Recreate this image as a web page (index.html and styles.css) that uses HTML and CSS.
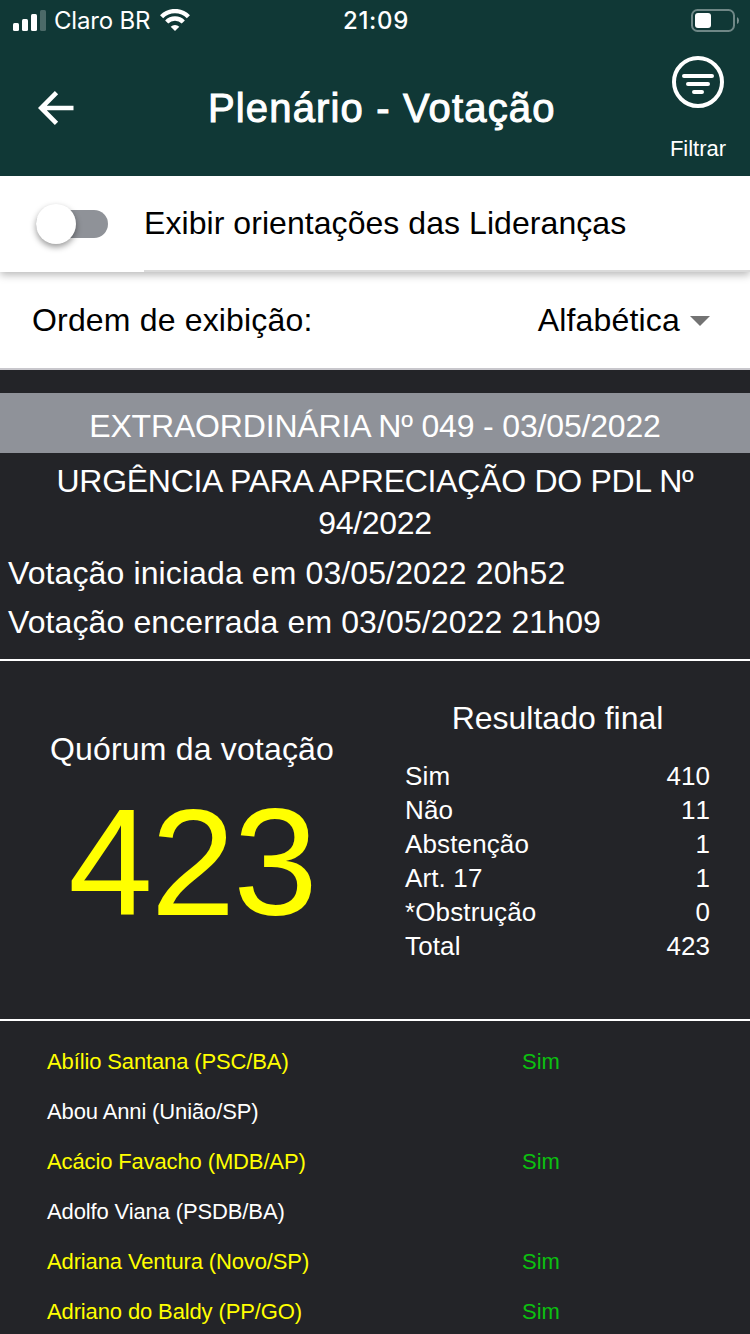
FILE: index.html
```html
<!DOCTYPE html>
<html lang="pt-BR">
<head>
  <meta charset="UTF-8" />
  <meta name="viewport" content="width=device-width, initial-scale=1" />
  <title>Plenário - Votação</title>
  <link rel="stylesheet" href="styles.css">
</head>
<body>
  <header class="header">
    <!-- Status bar -->
    <div class="status">
      <div class="carrier">
        <svg class="signal" width="33" height="21" viewBox="0 0 33 21" fill="#fff">
          <rect x="0" y="13" width="6" height="8" rx="1.5" />
          <rect x="9" y="9" width="6" height="12" rx="1.5" />
          <rect x="18" y="4" width="6" height="17" rx="1.5" />
          <rect x="27" y="0" width="6" height="21" rx="1.5" opacity="0.25" />
        </svg>
        <span class="carrier-name">Claro BR</span>
        <svg class="wifi" width="30" height="22" viewBox="0 0 30 22">
          <g fill="none" stroke="#fff" stroke-width="4.4">
            <path d="M1.6 7.7a18.8 18.8 0 0 1 26.8 0" />
            <path d="M6.7 13a11.6 11.6 0 0 1 16.6 0" />
          </g>
          <path d="M15 22l-4.3-4.3a6.1 6.1 0 0 1 8.6 0z" fill="#fff" />
        </svg>
      </div>
      <div class="clock">21:09</div>
      <div class="battery-wrap">
        <svg width="48" height="23" viewBox="0 0 48 23">
          <rect x="1" y="1" width="42" height="21" rx="5.5" fill="none" stroke="#fff" stroke-opacity="0.4" stroke-width="2" />
          <rect x="4" y="4" width="16" height="15" rx="3" fill="#fff" />
          <path d="M46 8q2 1 2 3.5t-2 3.5z" fill="#fff" opacity="0.45" />
        </svg>
      </div>
    </div>

    <!-- Toolbar -->
    <div class="toolbar">
      <svg class="back" width="36" height="34" viewBox="0 0 36 34" fill="none" stroke="#fff" stroke-width="4.6">
        <path d="M35.5 17H3.5M18.5 1.700L3.200 17l15.300 15.300" />
      </svg>
      <h1>Plenário - Votação</h1>
      <div class="filter">
        <svg width="52" height="52" viewBox="0 0 52 52" fill="none" stroke="#fff" stroke-width="4" stroke-linecap="round">
          <circle cx="26" cy="26" r="24" />
          <path d="M12 20h28M16 28h20M22 36h8" />
        </svg>
        <span>Filtrar</span>
      </div>
    </div>
  </header>

  <div class="option">
    <div class="toggle"><div class="knob"></div></div>
    <div class="option-label">Exibir orientações das Lideranças</div>
  </div>

  <div class="order">
    <span>Ordem de exibição:</span>
    <div class="select">Alfabética<i class="caret"></i></div>
  </div>

  <main>
    <div class="session">EXTRAORDINÁRIA Nº 049 - 03/05/2022</div>
    <div class="subject">URGÊNCIA PARA APRECIAÇÃO DO PDL Nº 94/2022</div>
    <div class="times">
      <div>Votação iniciada em 03/05/2022 20h52</div>
      <div>Votação encerrada em 03/05/2022 21h09</div>
    </div>

    <div class="summary">
      <div class="quorum">
        <div class="quorum-title">Quórum da votação</div>
        <div class="quorum-number">423</div>
      </div>
      <div class="result">
        <div class="result-title">Resultado final</div>
        <div class="row"><span>Sim</span><span>410</span></div>
        <div class="row"><span>Não</span><span>11</span></div>
        <div class="row"><span>Abstenção</span><span>1</span></div>
        <div class="row"><span>Art. 17</span><span>1</span></div>
        <div class="row"><span>*Obstrução</span><span>0</span></div>
        <div class="row"><span>Total</span><span>423</span></div>
      </div>
    </div>

    <div class="votes">
      <div class="vote voted"><span>Abílio Santana (PSC/BA)</span><b>Sim</b></div>
      <div class="vote"><span>Abou Anni (União/SP)</span></div>
      <div class="vote voted"><span>Acácio Favacho (MDB/AP)</span><b>Sim</b></div>
      <div class="vote"><span>Adolfo Viana (PSDB/BA)</span></div>
      <div class="vote voted"><span>Adriana Ventura (Novo/SP)</span><b>Sim</b></div>
      <div class="vote voted"><span>Adriano do Baldy (PP/GO)</span><b>Sim</b></div>
    </div>
  </main>
</body>
</html>
```
FILE: styles.css
```css
* {
  box-sizing: border-box;
}
body {
  margin: 0;
  height: 1334px;
  overflow: hidden;
  background: #232428;
  font-family: "Liberation Sans", Arial, sans-serif;
  font-size: 32px;
  color: #fff;
}
.header {
  height: 176px;
  background: #103836;
}
.status {
  display: grid;
  grid-template-columns: 1fr auto 1fr;
  align-items: center;
  height: 40px;
  padding: 0 11px 0 13px;
  font-family: Inter, sans-serif;
  font-size: 24px;
}
.carrier {
  display: flex;
  align-items: center;
}
.carrier-name {
  margin: 0 10px 0 8px;
  letter-spacing: -0.2px;
}
.clock {
  font-weight: 500;
  letter-spacing: 0.7px;
}
.battery-wrap {
  display: flex;
  justify-content: flex-end;
}
.toolbar {
  display: grid;
  grid-template-columns: 144px 1fr 104px;
  height: 136px;
}
.back {
  margin: 51px 0 0 38px;
}
h1 {
  margin: 0 -20px 0 0;
  padding-left: 64px;
  font-size: 40px;
  line-height: 136px;
  font-weight: normal;
  letter-spacing: 1.15px;
  -webkit-text-stroke: 1px #fff;
  white-space: nowrap;
}
.filter {
  display: flex;
  flex-direction: column;
  align-items: center;
  padding-top: 16px;
  font-size: 22px;
  line-height: 26px;
}
.filter span {
  margin-top: 28px;
}
.option {
  position: relative;
  display: flex;
  height: 96px;
  background: #fff;
  color: #000;
  box-shadow: 0 3px 8px rgba(0, 0, 0, 0.28);
}
/* keeps the header above the row shadow */
.header {
  position: relative;
  z-index: 1;
}
.toggle {
  width: 72px;
  height: 28px;
  margin: 34px 36px 0;
  border-radius: 14px;
  background: #8f9298;
}
.knob {
  width: 40px;
  height: 40px;
  margin-top: -6px;
  border-radius: 50%;
  background: #fff;
  box-shadow: 0 3px 6px rgba(0, 0, 0, 0.4);
}
.option-label {
  flex: 1;
  line-height: 94px;
  letter-spacing: 0.06px;
  border-bottom: 2px solid #dadada;
}
.order {
  display: flex;
  justify-content: space-between;
  height: 98px;
  padding: 0 40px 0 32px;
  line-height: 96px;
  letter-spacing: 0.17px;
  color: #000;
  background: #fff;
  border-bottom: 2px solid #c8c7cc;
}
.select {
  display: flex;
  align-items: center;
}
.caret {
  margin: 2px 0 0 10px;
  border: 10px solid transparent;
  border-top-color: #737373;
  border-bottom: 0;
}
.session {
  height: 60px;
  margin-top: 23px;
  padding-top: 3px;
  line-height: 60px;
  letter-spacing: -0.17px;
  text-align: center;
  background: #8f9299;
}
.subject {
  padding: 7px 30px 0;
  line-height: 42px;
  letter-spacing: -0.28px;
  text-align: center;
}
.times {
  padding: 5px 8px 12px;
  line-height: 49px;
  letter-spacing: 0.11px;
  border-bottom: 2px solid #fff;
}
.summary {
  display: flex;
  height: 360px;
  border-bottom: 2px solid #fff;
}
.quorum {
  width: 384px;
  padding-top: 68px;
  line-height: 40px;
  text-align: center;
}
.quorum-title {
  letter-spacing: 0.18px;
}
.quorum-number {
  margin-top: 13px;
  font-size: 152px;
  line-height: 160px;
  letter-spacing: -2px;
  color: #ff0;
}
.result {
  flex: 1;
  padding: 37px 40px 0 21px;
}
.result-title {
  margin-bottom: 21px;
  line-height: 40px;
  text-align: center;
}
.row {
  display: flex;
  justify-content: space-between;
  font-size: 26px;
  line-height: 34px;
  font-kerning: none;
}
.row span:first-child {
  font-kerning: normal;
  letter-spacing: 0.13px;
}
.votes {
  padding: 16px 47px 0;
}
.vote {
  display: flex;
  height: 50px;
  line-height: 50px;
  font-size: 22px;
  letter-spacing: -0.13px;
}
.vote span {
  width: 475px;
}
.vote b {
  font-weight: normal;
  letter-spacing: 0;
  color: #0cc010;
}
.voted {
  color: #ff0;
}
```
